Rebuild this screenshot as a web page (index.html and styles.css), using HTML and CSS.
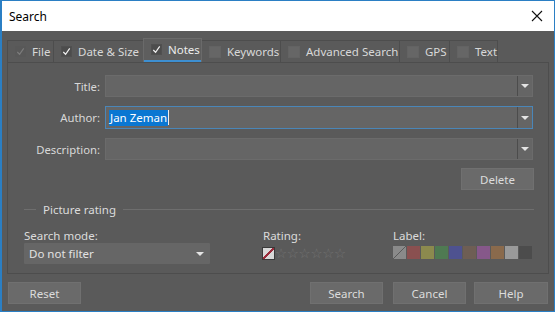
FILE: index.html
```html
<!DOCTYPE html>
<html>
<head>
<meta charset="utf-8">
<link rel="stylesheet" href="styles.css">
</head>
<body>
<div class="window">
  <div class="titlebar">
    <span class="title">Search</span>
    <svg class="close" width="12" height="12" viewBox="0 0 12 12"><path d="M1 1L11 11M11 1L1 11" stroke="#111" stroke-width="1.1" fill="none"/></svg>
  </div>
  <div class="content">
    <div class="tabs">
      <div class="tab t-file"><span class="cb cb-dis"><svg viewBox="0 0 12 12"><path d="M2.5 6.5L5 9L9.5 2.5" stroke="#7c7c7c" stroke-width="1.3" fill="none"/></svg></span>File</div>
      <div class="tab t-date"><span class="cb"><svg viewBox="0 0 12 12"><path d="M2.5 6.5L5 9L9.5 2.5" stroke="#f0f0f0" stroke-width="1.3" fill="none"/></svg></span>Date &amp; Size</div>
      <div class="tab t-notes active"><span class="cb"><svg viewBox="0 0 12 12"><path d="M2.5 6.5L5 9L9.5 2.5" stroke="#f0f0f0" stroke-width="1.3" fill="none"/></svg></span>Notes</div>
      <div class="tab t-kw"><span class="cb cb-off"></span>Keywords</div>
      <div class="tab t-adv"><span class="cb cb-off"></span>Advanced Search</div>
      <div class="tab t-gps"><span class="cb cb-off"></span>GPS</div>
      <div class="tab t-text"><span class="cb cb-off"></span>Text</div>
    </div>
    <div class="panel">
      <div class="form">
        <label class="lbl">Title:</label>
        <div class="combo"><span class="val"></span><span class="drop"><i class="arrow"></i></span></div>
        <label class="lbl">Author:</label>
        <div class="combo focus"><span class="val"><span class="sel">Jan Zeman</span><span class="caret"></span></span><span class="drop"><i class="arrow"></i></span></div>
        <label class="lbl">Description:</label>
        <div class="combo"><span class="val"></span><span class="drop"><i class="arrow"></i></span></div>
      </div>
      <div class="delrow"><button class="btn del">Delete</button></div>
      <div class="group">
        <span class="gline short"></span><span class="gtitle">Picture rating</span><span class="gline long"></span>
      </div>
      <div class="rating-row">
        <div class="col col-mode">
          <div class="clabel">Search mode:</div>
          <div class="select"><span>Do not filter</span><i class="arrow"></i></div>
        </div>
        <div class="col col-rating">
          <div class="clabel">Rating:</div>
          <div class="stars">
            <span class="nofilter"></span><span class="star">☆☆☆☆☆☆</span>
          </div>
        </div>
        <div class="col col-label">
          <div class="clabel">Label:</div>
          <div class="swatches">
            <span class="sw sw0"></span><span class="sw" style="background:#8a5050"></span><span class="sw" style="background:#8c8a4e"></span><span class="sw" style="background:#4f7a52"></span><span class="sw" style="background:#4e5290"></span><span class="sw" style="background:#6e5e54"></span><span class="sw" style="background:#86588a"></span><span class="sw" style="background:#8a6a4c"></span><span class="sw" style="background:#9a9a9a"></span><span class="sw" style="background:#4c4c4c"></span>
          </div>
        </div>
      </div>
    </div>
    <div class="buttons">
      <button class="btn reset">Reset</button>
      <div class="right">
        <button class="btn b-search">Search</button>
        <button class="btn b-cancel">Cancel</button>
        <button class="btn b-help">Help</button>
      </div>
    </div>
  </div>
</div>
</body>
</html>
```
FILE: styles.css
```css
* { box-sizing: border-box; }
html, body { margin: 0; padding: 0; background: #5a5a5a; }
body { font-family: "Noto Sans", "Open Sans", sans-serif; font-size: 12px; color: #dcdcdc; }

.window {
  width: 555px; height: 312px;
  border: 1px solid #2b7fc4;
  border-left-width: 2px;
  display: flex; flex-direction: column;
  background: #5a5a5a;
  overflow: hidden;
}
.titlebar {
  height: 30px; background: #fff; flex: none;
  display: flex; align-items: center; justify-content: space-between;
  padding: 0 10px 0 7px;
}
.title { color: #000; font-size: 12px; }
.close { display: block; margin-right: 1px; }

.content { flex: 1; padding: 8px 5px 0 5px; display: flex; flex-direction: column; }

.tabs { display: flex; height: 23px; align-items: flex-end; }
.tab {
  height: 22px; display: flex; align-items: center;
  padding: 0 0 0 7px;
  border: 1px solid #4d4d4d; border-bottom: none; border-right: none;
  color: #d8d8d8;
  white-space: nowrap;
  font-size: 11.5px;
}
.tab:last-child { border-right: 1px solid #4d4d4d; }
.t-file { width: 46px; }
.t-date { width: 90px; }
.t-notes { width: 59px; }
.t-kw { width: 78px; }
.t-adv { width: 119px; }
.t-gps { width: 50px; }
.t-text { width: 49px; }
.tab.active {
  height: 24px; background: #5e5e5e; border-color: #6a6a6a;
  border-right: 1px solid #6a6a6a;
  box-shadow: inset 0 -2px 0 #3d8fd1;
  color: #ececec;
  padding-bottom: 2px;
}
.tab.active + .tab { border-left: none; }
.cb {
  width: 11px; height: 11px; margin-right: 6px; flex: none;
  display: inline-block; background: #4c4c4c; border: 1px solid #505050;
}
.cb svg { display: block; width: 11px; height: 11px; margin: -1px; }
.cb-dis { background: #585858; border-color: #585858; }
.cb-off { background: #666; border-color: #636363; width: 12px; height: 12px; }

.panel {
  height: 212px; border: 1px solid #4d4d4d;
  padding: 12px 14px 0 0;
  display: flex; flex-direction: column;
}
.form {
  display: grid; grid-template-columns: 92px 428px;
  column-gap: 5px; row-gap: 9px;
  align-items: center;
}
.lbl { text-align: right; color: #d8d8d8; font-size: 11.3px; }
.combo {
  height: 22px; background: #656565; border: 1px solid #6b6b6b;
  display: flex; align-items: stretch;
}
.combo.focus { border-color: #4a86b8; height: 23px; }
.val { flex: 1; display: flex; align-items: center; padding-left: 3px; font-size: 11.5px; }
.sel { background: #0a77d2; color: #fff; padding: 0 1px; line-height: 16px; }
.caret { width: 1px; height: 15px; background: #eee; }
.drop { width: 15px; border-left: 1px solid #4c4c4c; display: flex; align-items: center; justify-content: center; }
.arrow {
  width: 0; height: 0; border-left: 4px solid transparent; border-right: 4px solid transparent;
  border-top: 4px solid #e4e4e4; display: block;
}
.delrow { display: flex; justify-content: flex-end; margin-top: 8px; }
.btn {
  font-family: inherit; font-size: 11.5px; color: #dcdcdc;
  background: #6a6a6a; border: 1px solid #707070;
  height: 22px; width: 73px; padding: 0;
}
.del { width: 73px; }

.group { display: flex; align-items: center; margin: 12px 0 0 16px; height: 14px; font-size: 11.5px; }
.gline { height: 1px; background: #6e6e6e; }
.gline.short { width: 12px; }
.gline.long { flex: 1; }
.gtitle { padding: 0 7px; color: #dcdcdc; }

.rating-row { display: flex; margin: 12px 0 0 16px; font-size: 11.5px; }
.clabel { height: 15px; line-height: 15px; margin-bottom: 0; color: #dcdcdc; }
.col-mode { width: 186px; }
.col-rating { margin-left: 53px; width: 130px; }
.col-label { width: 140px; }
.select {
  height: 21px; background: #666; border-radius: 1px;
  display: flex; align-items: center; justify-content: space-between;
  padding: 0 6px 0 5px; color: #e2e2e2;
}
.stars { display: flex; align-items: center; height: 16px; margin-left: -1px; margin-top: 2px; }
.nofilter {
  width: 13px; height: 13px; border: 1px solid #3a3a3a; flex: none;
  background: linear-gradient(to bottom right, #d8d8d8 calc(50% - 1px), #9a2b3a calc(50% - 1px), #9a2b3a calc(50% + 1px), #d8d8d8 calc(50% + 1px));
}
.star { color: #727272; font-family: "DejaVu Sans", sans-serif; font-size: 13.5px; letter-spacing: -0.3px; margin-left: 0; line-height: 13px; }
.swatches { display: flex; gap: 1px; height: 13px; margin-top: 3px; margin-left: 0; }
.sw { width: 13px; height: 13px; display: block; }
.sw0 { background: linear-gradient(to bottom right, #8a8a8a calc(50% - 0.7px), #5a5a5a calc(50% - 0.7px), #5a5a5a calc(50% + 0.7px), #8a8a8a calc(50% + 0.7px)); }

.buttons { display: flex; justify-content: space-between; margin-top: 8px; padding-right: 1px; padding-left: 1px; }
.right { display: flex; gap: 8px; }
.b-search { width: 73px; margin-right: 2px; }
.b-help { width: 74px; }
```
